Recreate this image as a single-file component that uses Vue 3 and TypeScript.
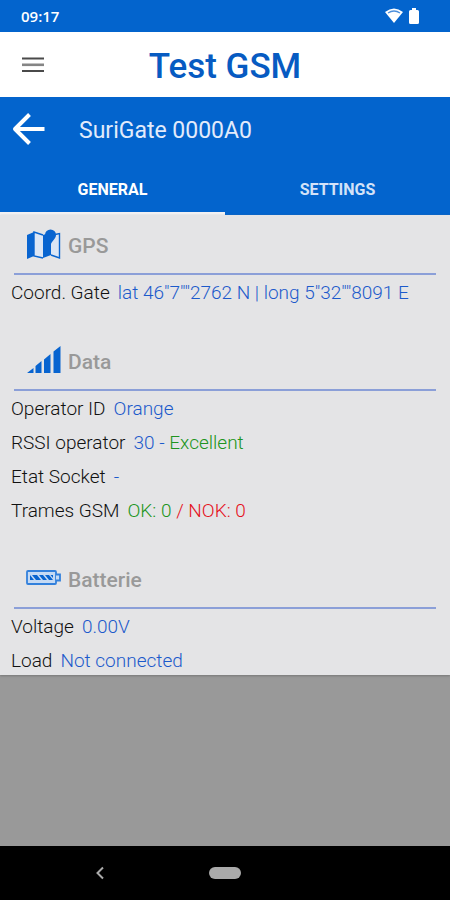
<script setup lang="ts">
import { ref } from 'vue'

type Tone = 'blue' | 'green' | 'red'
interface Part { text: string; tone: Tone }
interface Row { label: string; parts: Part[] }
interface Section { title: string; icon: 'map' | 'signal' | 'battery'; rows: Row[] }

const tabs = ['GENERAL', 'SETTINGS']
const active = ref(0)

const sections: Section[] = [
  {
    title: 'GPS',
    icon: 'map',
    rows: [
      { label: 'Coord. Gate', parts: [{ text: 'lat 46"7""2762 N | long 5"32""8091 E', tone: 'blue' }] },
    ],
  },
  {
    title: 'Data',
    icon: 'signal',
    rows: [
      { label: 'Operator ID', parts: [{ text: 'Orange', tone: 'blue' }] },
      { label: 'RSSI operator', parts: [{ text: '30 - ', tone: 'blue' }, { text: 'Excellent', tone: 'green' }] },
      { label: 'Etat Socket', parts: [{ text: '-', tone: 'blue' }] },
      { label: 'Trames GSM', parts: [{ text: 'OK: 0', tone: 'green' }, { text: ' / NOK: 0', tone: 'red' }] },
    ],
  },
  {
    title: 'Batterie',
    icon: 'battery',
    rows: [
      { label: 'Voltage', parts: [{ text: '0.00V', tone: 'blue' }] },
      { label: 'Load', parts: [{ text: 'Not connected', tone: 'blue' }] },
    ],
  },
]
</script>

<template>
  <div class="screen">
    <div class="status">
      <span class="clock">09:17</span>
      <span class="status-icons">
        <svg width="18" height="16" viewBox="0 0 18 16" aria-hidden="true">
          <path d="M0 4Q9-3 18 4L9 15Z" fill="#fff" />
          <path d="M3 5Q9 1 15 5" fill="none" stroke="#4c8fdc" stroke-width="1.4" />
        </svg>
        <svg width="10" height="16" viewBox="0 0 10 16" aria-hidden="true">
          <path d="M3 0H7V2H8.500Q10 2 10 3.500V14.500Q10 16 8.500 16H1.500Q0 16 0 14.500V3.500Q0 2 1.500 2H3Z" fill="#fff" />
        </svg>
      </span>
    </div>

    <header class="brand">
      <button class="icon-button menu" type="button" aria-label="Menu">
        <svg width="22" height="16" viewBox="0 0 22 16" aria-hidden="true">
          <path d="M0 1.500H22M0 14H22" stroke="#4a4a4a" stroke-width="2" />
          <path d="M0 7.800H22" stroke="#858585" stroke-width="2.600" />
        </svg>
      </button>
      <h1>Test GSM</h1>
    </header>

    <div class="device">
      <div class="device-row">
        <button class="icon-button back" type="button" aria-label="Back">
          <svg width="34" height="34" viewBox="0 0 34 34" aria-hidden="true">
            <path d="M17.500 1.500L3 16L17.500 30.500M3 16H32.500" fill="none" stroke="#fff" stroke-width="4" stroke-linejoin="round" />
          </svg>
        </button>
        <h2>SuriGate 0000A0</h2>
      </div>
      <div class="tabs" role="tablist">
        <button
          v-for="(tab, i) in tabs"
          :key="tab"
          class="tab"
          :class="{ active: active === i }"
          type="button"
          role="tab"
          :aria-selected="active === i"
          @click="active = i"
        >{{ tab }}</button>
      </div>
    </div>

    <main class="content">
      <section v-for="s in sections" :key="s.title" class="section">
        <div class="head">
          <svg v-if="s.icon === 'map'" width="36" height="32" viewBox="0 0 36 32" aria-hidden="true">
            <path d="M1 7L8 4V28L1 31Z" fill="#0864d0" />
            <path d="M8 4L17 7V30L8 28Z" fill="#dce6f5" />
            <path d="M17 7L20 6L25 16V27L17 30Z" fill="#0864d0" />
            <path d="M25 15L29 7L33.500 6V30L25 27Z" fill="#dce6f5" />
            <path d="M17 7L8 4V28L17 30M29 6.500L33.500 5.500V30L25 27" fill="none" stroke="#0864d0" stroke-width="1.400" />
            <path d="M24.500 18C24 13 19 11 19 7A5.500 5.500 0 0 1 30 7C30 11 25 13 24.500 18Z" fill="#0864d0" />
          </svg>
          <svg v-else-if="s.icon === 'signal'" width="36" height="32" viewBox="0 0 36 32" aria-hidden="true">
            <path d="M1 29L7.500 24V29ZM9.500 22L15.500 17V29H9.500ZM18 15.500L24.500 10V29H18ZM27.500 7.500L34.500 2V29H27.500Z" fill="#0864d0" />
          </svg>
          <svg v-else width="36" height="32" viewBox="0 0 36 32" aria-hidden="true">
            <rect x="1" y="9" width="29" height="13" rx="1" fill="#c5daf4" stroke="#3280dc" stroke-width="1.800" />
            <path d="M30 12.500H34V18.500H30" fill="#c5daf4" stroke="#3280dc" stroke-width="1.800" />
            <path d="M4 13L8 18H4ZM6 13H11L15 18H10ZM13 13H17L21 18H17ZM19 13H23L27 18H23ZM24.500 13H27V16Z" fill="#0864d0" />
          </svg>
          <h3>{{ s.title }}</h3>
        </div>
        <dl class="rows">
          <div v-for="r in s.rows" :key="r.label" class="row">
            <dt>{{ r.label }}</dt>
            <dd><span v-for="p in r.parts" :key="p.text" :class="p.tone">{{ p.text }}</span></dd>
          </div>
        </dl>
      </section>
    </main>

    <div class="backdrop"></div>

    <nav class="system">
      <button class="icon-button" type="button" aria-label="System back">
        <svg width="8" height="14" viewBox="0 0 8 14" aria-hidden="true">
          <path d="M7 1.500L1.500 7L7 12.500" fill="none" stroke="#aaa" stroke-width="2" />
        </svg>
      </button>
      <button class="home" type="button" aria-label="Home"></button>
      <span></span>
    </nav>
  </div>
</template>

<style>
body {
  margin: 0;
}
</style>

<style scoped>
.screen {
  min-height: 100vh;
  display: flex;
  flex-direction: column;
  background: #999;
  font-family: Roboto, "Liberation Sans", sans-serif;
  color: #111;
}
h1, h2, h3, dl, dd {
  margin: 0;
}
svg {
  display: block;
}
button {
  margin: 0;
  padding: 0;
  border: 0;
  background: none;
  font-family: inherit;
  cursor: pointer;
}
.status {
  display: flex;
  align-items: center;
  justify-content: space-between;
  height: 32px;
  padding: 0 31px 0 21px;
  background: #0364cd;
  color: #fff;
}
.clock {
  font-family: "Open Sans", sans-serif;
  font-size: 15px;
  line-height: 20px;
  font-weight: 600;
}
.status-icons {
  display: flex;
  align-items: center;
  gap: 6px;
}
.brand {
  display: grid;
  grid-template-columns: 54px 1fr 54px;
  align-items: center;
  height: 65px;
  background: #fff;
}
.menu {
  padding-left: 22px;
}
h1 {
  padding-top: 4px;
  font-size: 35px;
  line-height: 40px;
  font-weight: 500;
  text-align: center;
  color: #075bc2;
}
.device {
  background: #0364cd;
  color: #e2ebfb;
}
.device-row {
  display: flex;
  align-items: center;
  gap: 33px;
  height: 66px;
  padding-left: 12px;
}
h2 {
  padding-top: 2px;
  font-size: 23px;
  line-height: 28px;
  font-weight: 400;
}
.tabs {
  display: flex;
}
.tab {
  flex: 1;
  height: 52px;
  padding-top: 4px;
  border-bottom: 3px solid transparent;
  font-size: 16px;
  line-height: 20px;
  font-weight: 700;
  color: #d3e2f8;
}
.tab.active {
  color: #fff;
  border-bottom-color: #f2f1f3;
}
.content {
  background: #e4e4e6;
  box-shadow: 0 1px 2px #777;
}
.section {
  padding-bottom: 26px;
}
.section:last-child {
  padding-bottom: 2px;
}
.head {
  display: flex;
  align-items: center;
  gap: 6px;
  height: 58px;
  margin: 0 14px;
  padding-left: 12px;
  border-bottom: 2px solid #8b9fd8;
}
h3 {
  font-size: 21px;
  line-height: 26px;
  font-weight: 500;
  padding-top: 4px;
  color: #999;
}
.rows {
  display: flex;
  flex-direction: column;
  gap: 10px;
  padding: 6px 11px 0;
}
.row {
  display: flex;
  gap: 8px;
  font-size: 19px;
  line-height: 24px;
  font-weight: 300;
  white-space: pre;
}
.blue {
  color: #1c5acb;
}
.green {
  color: #209420;
}
.red {
  color: #e5101b;
}
.backdrop {
  flex: 1;
}
.system {
  display: grid;
  grid-template-columns: 1fr 32px 1fr;
  align-items: center;
  height: 54px;
  background: #000;
}
.system .icon-button {
  justify-self: center;
  padding-right: 9px;
}
.home {
  height: 12px;
  border-radius: 6px;
  background: #aaa;
}
</style>
